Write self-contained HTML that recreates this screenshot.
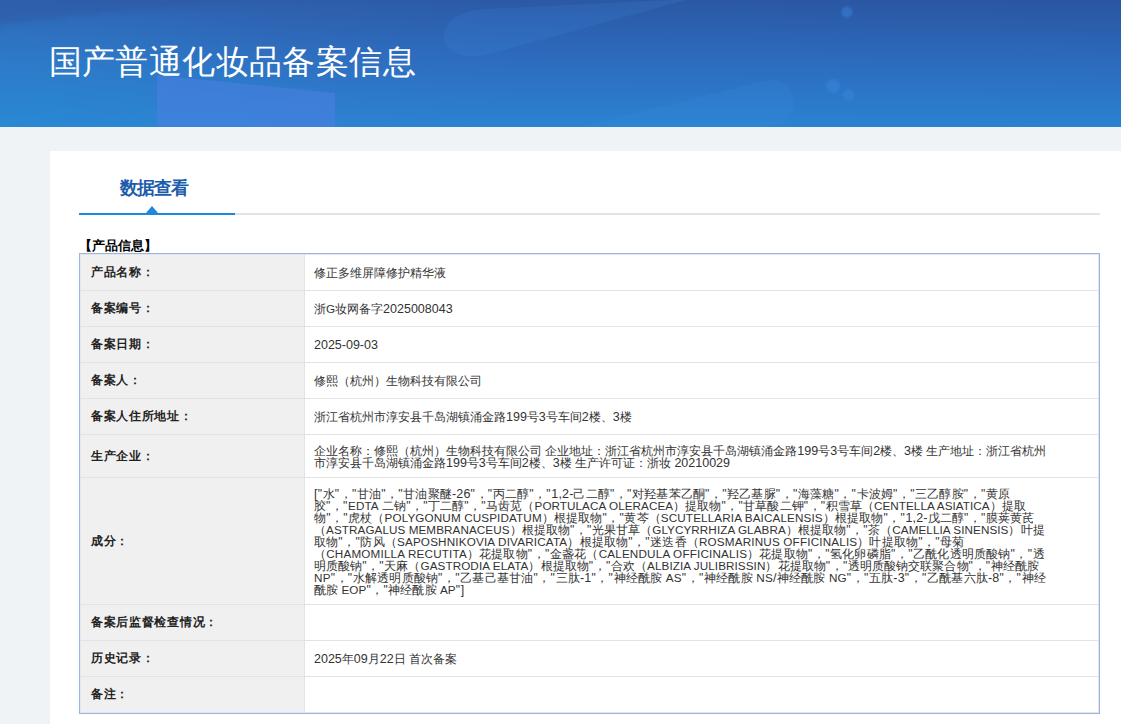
<!DOCTYPE html>
<html><head><meta charset="utf-8">
<style>
*{margin:0;padding:0;box-sizing:border-box}
html,body{width:1121px;height:724px;overflow:hidden;background:#eff3f6;font-family:"Liberation Sans",sans-serif}
#hdr{position:absolute;left:0;top:0;width:1121px;height:127px;overflow:hidden}
#title{position:absolute;left:48.6px;top:39.5px;font-size:33px;letter-spacing:0.4px;line-height:44px;color:#fff;white-space:nowrap}
#card{position:absolute;left:50px;top:151px;width:1071px;height:573px;background:#fff}
#tab{position:absolute;left:120px;top:176px;font-size:18px;letter-spacing:-1.1px;line-height:24px;font-weight:bold;color:#1b5dac;white-space:nowrap}
#gline{position:absolute;left:79px;top:212.5px;width:1021px;height:2px;background:#e3e3e3}
#bline{position:absolute;left:79px;top:212.5px;width:156px;height:2px;background:#1f88dc}
#tri{position:absolute;left:146px;top:206px;width:0;height:0;border-left:6.5px solid transparent;border-right:6.5px solid transparent;border-bottom:7px solid #1f88dc}
#sec{position:absolute;left:78.5px;top:238px;font-size:13px;line-height:16px;font-weight:bold;color:#000;white-space:nowrap}
#tbl{position:absolute;left:79px;top:253px;width:1021px;height:461px;border:1px solid #96b6e8;background:#fff}
#frm{position:absolute;left:0;top:0;width:1019px;height:459px;border:1px solid #e6e6e6}
.lab{position:absolute;left:0;width:224px;background:#f0f0f0;border-right:1px solid #e3e3e3;border-bottom:1px solid #e3e3e3}
.val{position:absolute;left:224px;width:793px;border-bottom:1px solid #e3e3e3}
.lt{position:absolute;left:10px;font-size:12px;letter-spacing:0.7px;line-height:12px;font-weight:bold;color:#222;white-space:nowrap}
.vt{position:absolute;left:9px;font-size:12px;line-height:12px;color:#333;white-space:nowrap}
.vt .q{letter-spacing:0.7px}
.vt .u{font-size:11.7px}
.vt .d{font-size:12.5px}
</style></head><body>
<div id="hdr"><svg width="1121" height="127" style="position:absolute;left:0;top:0">
<defs>
<linearGradient id="g1" x1="0" y1="0" x2="0" y2="1">
<stop offset="0" stop-color="#2a55a1"/><stop offset="0.5" stop-color="#2c6bbd"/><stop offset="1" stop-color="#2a82d1"/>
</linearGradient>
<linearGradient id="g2" x1="0" y1="0" x2="1" y2="0">
<stop offset="0" stop-color="#3a86d8" stop-opacity="0.35"/><stop offset="0.45" stop-color="#3a86d8" stop-opacity="0.08"/><stop offset="1" stop-color="#3a86d8" stop-opacity="0"/>
</linearGradient>
<radialGradient id="g3" cx="0" cy="127" r="350" gradientUnits="userSpaceOnUse" gradientTransform="translate(0 127) scale(1 0.4) translate(0 -127)"><stop offset="0" stop-color="#1f8fd2" stop-opacity="0.4"/><stop offset="1" stop-color="#1f8fd2" stop-opacity="0"/></radialGradient>
<filter id="bl2" x="-20%" y="-100%" width="140%" height="300%"><feGaussianBlur stdDeviation="3"/></filter>
<filter id="bl" x="-50%" y="-50%" width="200%" height="200%"><feGaussianBlur stdDeviation="1.2"/></filter>
</defs>
<rect width="1121" height="127" fill="url(#g1)"/>
<rect width="1121" height="127" fill="url(#g2)"/>
<rect width="1121" height="127" fill="url(#g3)"/>
<path d="M-20 -20 L380 -20 L380 -4 Q 160 2 -20 28 Z" fill="#2a55a0" fill-opacity="0.45" filter="url(#bl2)"/>
<g fill="#3f8fe0" fill-opacity="0.17">
<path d="M690 -1 L490 54 C458 62 441 48 444 33 C447 18 462 11 485 9 L690 -1 Z"/>
<rect x="440" y="80" width="354" height="46" rx="23" transform="rotate(-14 771 103)"/>
</g>
<path d="M157 75 L335 93 L335 127 L157 127 Z" fill="#4d7fe6" fill-opacity="0.5"/>
<g fill="#3a8ae0" fill-opacity="0.45" filter="url(#bl)">
<circle cx="847" cy="12" r="5.5"/><circle cx="833" cy="86" r="7"/><circle cx="849" cy="95" r="5.5"/>
</g>
</svg>
<div id="title">国产普通化妆品备案信息</div></div>
<div id="card"></div>
<div id="tab">数据查看</div>
<div id="gline"></div><div id="bline"></div><div id="tri"></div>
<div id="sec">【产品信息】</div>
<div id="tbl"><div id="frm">
<div class="lab" style="top:0px;height:36px;"><div class="lt" style="top:11px">产品名称：</div></div>
<div class="val" style="top:0px;height:36px;"><div class="vt" style="top:12px"><div class="ln">修正多维屏障修护精华液</div></div></div>
<div class="lab" style="top:36px;height:36px;"><div class="lt" style="top:11px">备案编号：</div></div>
<div class="val" style="top:36px;height:36px;"><div class="vt" style="top:12px"><div class="ln">浙<span class="u">G</span>妆网备字<span class="d">2025008043</span></div></div></div>
<div class="lab" style="top:72px;height:36px;"><div class="lt" style="top:11px">备案日期：</div></div>
<div class="val" style="top:72px;height:36px;"><div class="vt" style="top:12px"><div class="ln"><span class="d">2025-09-03</span></div></div></div>
<div class="lab" style="top:108px;height:36px;"><div class="lt" style="top:11px">备案人：</div></div>
<div class="val" style="top:108px;height:36px;"><div class="vt" style="top:12px"><div class="ln">修熙（杭州）生物科技有限公司</div></div></div>
<div class="lab" style="top:144px;height:36px;"><div class="lt" style="top:11px">备案人住所地址：</div></div>
<div class="val" style="top:144px;height:36px;"><div class="vt" style="top:12px"><div class="ln">浙江省杭州市淳安县千岛湖镇涌金路<span class="d">199</span>号<span class="d">3</span>号车间<span class="d">2</span>楼、<span class="d">3</span>楼</div></div></div>
<div class="lab" style="top:180px;height:43px;"><div class="lt" style="top:15px">生产企业：</div></div>
<div class="val" style="top:180px;height:43px;"><div class="vt" style="top:10px"><div class="ln">企业名称：修熙（杭州）生物科技有限公司 企业地址：浙江省杭州市淳安县千岛湖镇涌金路<span class="d">199</span>号<span class="d">3</span>号车间<span class="d">2</span>楼、<span class="d">3</span>楼 生产地址：浙江省杭州</div><div class="ln">市淳安县千岛湖镇涌金路<span class="d">199</span>号<span class="d">3</span>号车间<span class="d">2</span>楼、<span class="d">3</span>楼 生产许可证：浙妆 <span class="d">20210029</span></div></div></div>
<div class="lab" style="top:223px;height:127px;"><div class="lt" style="top:57px">成分：</div></div>
<div class="val" style="top:223px;height:127px;"><div class="vt" style="top:10px"><div class="ln" style="letter-spacing:0.164px"><span class="d">[</span><span class="q">"</span>水<span class="q">"</span>，<span class="q">"</span>甘油<span class="q">"</span>，<span class="q">"</span>甘油聚醚<span class="d">-26</span><span class="q">"</span>，<span class="q">"</span>丙二醇<span class="q">"</span>，<span class="q">"</span><span class="d">1,2-</span>己二醇<span class="q">"</span>，<span class="q">"</span>对羟基苯乙酮<span class="q">"</span>，<span class="q">"</span>羟乙基脲<span class="q">"</span>，<span class="q">"</span>海藻糖<span class="q">"</span>，<span class="q">"</span>卡波姆<span class="q">"</span>，<span class="q">"</span>三乙醇胺<span class="q">"</span>，<span class="q">"</span>黄原</div><div class="ln" style="letter-spacing:0.06px">胶<span class="q">"</span>，<span class="q">"</span><span class="u">EDTA</span> 二钠<span class="q">"</span>，<span class="q">"</span>丁二醇<span class="q">"</span>，<span class="q">"</span>马齿苋（<span class="u">PORTULACA OLERACEA</span>）提取物<span class="q">"</span>，<span class="q">"</span>甘草酸二钾<span class="q">"</span>，<span class="q">"</span>积雪草（<span class="u">CENTELLA ASIATICA</span>）提取</div><div class="ln" style="letter-spacing:0.122px">物<span class="q">"</span>，<span class="q">"</span>虎杖（<span class="u">POLYGONUM CUSPIDATUM</span>）根提取物<span class="q">"</span>，<span class="q">"</span>黄芩（<span class="u">SCUTELLARIA BAICALENSIS</span>）根提取物<span class="q">"</span>，<span class="q">"</span><span class="d">1,2-</span>戊二醇<span class="q">"</span>，<span class="q">"</span>膜荚黄芪</div><div class="ln" style="letter-spacing:0.069px">（<span class="u">ASTRAGALUS MEMBRANACEUS</span>）根提取物<span class="q">"</span>，<span class="q">"</span>光果甘草（<span class="u">GLYCYRRHIZA GLABRA</span>）根提取物<span class="q">"</span>，<span class="q">"</span>茶（<span class="u">CAMELLIA SINENSIS</span>）叶提</div><div class="ln" style="letter-spacing:0.171px">取物<span class="q">"</span>，<span class="q">"</span>防风（<span class="u">SAPOSHNIKOVIA DIVARICATA</span>）根提取物<span class="q">"</span>，<span class="q">"</span>迷迭香（<span class="u">ROSMARINUS OFFICINALIS</span>）叶提取物<span class="q">"</span>，<span class="q">"</span>母菊</div><div class="ln" style="letter-spacing:0.173px">（<span class="u">CHAMOMILLA RECUTITA</span>）花提取物<span class="q">"</span>，<span class="q">"</span>金盏花（<span class="u">CALENDULA OFFICINALIS</span>）花提取物<span class="q">"</span>，<span class="q">"</span>氢化卵磷脂<span class="q">"</span>，<span class="q">"</span>乙酰化透明质酸钠<span class="q">"</span>，<span class="q">"</span>透</div><div class="ln" style="letter-spacing:0.076px">明质酸钠<span class="q">"</span>，<span class="q">"</span>天麻（<span class="u">GASTRODIA ELATA</span>）根提取物<span class="q">"</span>，<span class="q">"</span>合欢（<span class="u">ALBIZIA JULIBRISSIN</span>）花提取物<span class="q">"</span>，<span class="q">"</span>透明质酸钠交联聚合物<span class="q">"</span>，<span class="q">"</span>神经酰胺</div><div class="ln" style="letter-spacing:0.19px"><span class="u">NP</span><span class="q">"</span>，<span class="q">"</span>水解透明质酸钠<span class="q">"</span>，<span class="q">"</span>乙基己基甘油<span class="q">"</span>，<span class="q">"</span>三肽<span class="d">-1</span><span class="q">"</span>，<span class="q">"</span>神经酰胺 <span class="u">AS</span><span class="q">"</span>，<span class="q">"</span>神经酰胺 <span class="u">NS</span><span class="d">/</span>神经酰胺 <span class="u">NG</span><span class="q">"</span>，<span class="q">"</span>五肽<span class="d">-3</span><span class="q">"</span>，<span class="q">"</span>乙酰基六肽<span class="d">-8</span><span class="q">"</span>，<span class="q">"</span>神经</div><div class="ln" style="letter-spacing:0.059px">酰胺 <span class="u">EOP</span><span class="q">"</span>，<span class="q">"</span>神经酰胺 <span class="u">AP</span><span class="q">"</span><span class="d">]</span></div></div></div>
<div class="lab" style="top:350px;height:36px;"><div class="lt" style="top:11px">备案后监督检查情况：</div></div>
<div class="val" style="top:350px;height:36px;"></div>
<div class="lab" style="top:386px;height:36px;"><div class="lt" style="top:11px">历史记录：</div></div>
<div class="val" style="top:386px;height:36px;"><div class="vt" style="top:12px"><div class="ln"><span class="d">2025</span>年<span class="d">09</span>月<span class="d">22</span>日 首次备案</div></div></div>
<div class="lab" style="top:422px;height:35px;border-bottom:0;"><div class="lt" style="top:11px">备注：</div></div>
<div class="val" style="top:422px;height:35px;border-bottom:0;"></div>
</div></div>
</body></html>
